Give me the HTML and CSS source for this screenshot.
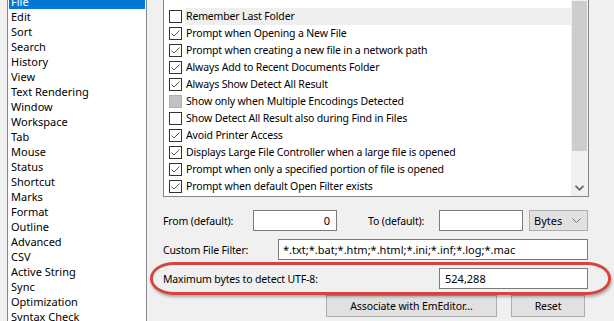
FILE: index.html
```html
<!DOCTYPE html>
<html lang="en">
<head>
    <meta charset="UTF-8">
    <title>Customize - File</title>
    <link rel="stylesheet" href="styles.css">
</head>
<body>
<div class="window">
    <ul class="nav">
        <li class="selected">File</li>
        <li>Edit</li>
        <li>Sort</li>
        <li>Search</li>
        <li>History</li>
        <li>View</li>
        <li>Text Rendering</li>
        <li>Window</li>
        <li>Workspace</li>
        <li>Tab</li>
        <li>Mouse</li>
        <li>Status</li>
        <li>Shortcut</li>
        <li>Marks</li>
        <li>Format</li>
        <li>Outline</li>
        <li>Advanced</li>
        <li>CSV</li>
        <li>Active String</li>
        <li>Sync</li>
        <li>Optimization</li>
        <li>Syntax Check</li>
    </ul>

    <div class="panel">
        <div class="checklist">
            <div class="rows">
                <div class="row hover"><span class="box"></span><span class="label">Remember Last Folder</span></div>
                <div class="row"><span class="box checked"></span><span class="label">Prompt when Opening a New File</span></div>
                <div class="row"><span class="box checked"></span><span class="label">Prompt when creating a new file in a network path</span></div>
                <div class="row"><span class="box checked"></span><span class="label">Always Add to Recent Documents Folder</span></div>
                <div class="row"><span class="box checked"></span><span class="label">Always Show Detect All Result</span></div>
                <div class="row"><span class="box grayed"></span><span class="label">Show only when Multiple Encodings Detected</span></div>
                <div class="row"><span class="box"></span><span class="label">Show Detect All Result also during Find in Files</span></div>
                <div class="row"><span class="box checked"></span><span class="label">Avoid Printer Access</span></div>
                <div class="row"><span class="box checked"></span><span class="label">Displays Large File Controller when a large file is opened</span></div>
                <div class="row"><span class="box checked"></span><span class="label">Prompt when only a specified portion of file is opened</span></div>
                <div class="row"><span class="box checked"></span><span class="label">Prompt when default Open Filter exists</span></div>
            </div>
            <div class="scrollbar">
                <div class="thumb"></div>
                <div class="track"></div>
                <div class="arrow">
                    <svg width="9" height="6" viewBox="0 0 9 6"><polyline points="0.5,0.8 4.5,4.8 8.5,0.8" fill="none" stroke="#606060" stroke-width="1.6"/></svg>
                </div>
            </div>
        </div>

        <div class="form">
            <div class="line">
                <label class="lbl-from">From (default):</label>
                <input class="field num" type="text" value="0">
                <label class="lbl-to">To (default):</label>
                <input class="field num-to" type="text" value="">
                <div class="combo">Bytes
                    <svg width="9" height="5" viewBox="0 0 9 5"><polyline points="0.5,0.5 4.5,4.5 8.5,0.5" fill="none" stroke="#707070" stroke-width="1"/></svg>
                </div>
            </div>
            <div class="line">
                <label class="lbl-filter">Custom File Filter:</label>
                <input class="field filter" type="text" value="*.txt;*.bat;*.htm;*.html;*.ini;*.inf;*.log;*.mac">
            </div>
            <div class="line marked">
                <label class="lbl-utf">Maximum bytes to detect UTF-8:</label>
                <input class="field utf" type="text" value="524,288">
                <div class="circle"></div>
            </div>
            <div class="buttons">
                <button class="btn assoc">Associate with EmEditor...</button>
                <button class="btn reset">Reset</button>
            </div>
        </div>
    </div>
</div>
</body>
</html>
```

FILE: styles.css
```css
*{
    margin: 0;
    padding: 0;
    box-sizing: border-box;
}
html, body{
    width: 614px;
    height: 321px;
    overflow: hidden;
    background: #f0f0f0;
    font-family: "Noto Sans", Arial, sans-serif;
    font-size: 11px;
    color: #000;
}
.window{
    display: flex;
    height: 321px;
}

/* left category list */
.nav{
    list-style: none;
    margin-left: 7px;
    margin-top: -7px;
    width: 140px;
    height: 340px;
    background: #fff;
    border: 1px solid #828790;
}
.nav li{
    height: 15px;
    line-height: 15px;
    margin: 0 1px;
    padding-left: 2px;
    white-space: nowrap;
}
.nav li.selected{
    background: #0078d7;
    color: #fff;
}

/* right side */
.panel{
    flex: 1;
    padding-left: 16px;
    font-size: 10.5px;
    letter-spacing: -0.15px;
}
.checklist{
    display: flex;
    width: 426px;
    margin-top: -1px;
    background: #fff;
    border: 1px solid #828790;
}
.rows{
    flex: 1;
    padding-top: 8px;
    padding-bottom: 1px;
}
.row{
    display: flex;
    align-items: center;
    height: 17px;
    padding-left: 5px;
}
.row .label{
    flex: 1;
    height: 17px;
    line-height: 17px;
    margin-left: 3px;
    padding-left: 1px;
    white-space: nowrap;
}
.row.hover .label{
    background: #efefef;
}
.box{
    width: 13px;
    height: 13px;
    border: 1px solid #333;
    background: #fff;
    flex: none;
}
.box.checked{
    background: #fff url("data:image/svg+xml;utf8,<svg xmlns='http://www.w3.org/2000/svg' width='11' height='11'><polyline points='1.5,5.5 4,8 9.5,2.5' fill='none' stroke='%23555' stroke-width='1'/></svg>") no-repeat center;
}
.box.grayed{
    background: #c2c2c2;
    border-color: #b0b0b0;
}

.scrollbar{
    width: 17px;
    display: flex;
    flex-direction: column;
    background: #f0f0f0;
}
.thumb{
    margin: 1px 1px 0 1px;
    height: 150px;
    background: #cdcdcd;
}
.track{
    flex: 1;
}
.arrow{
    height: 17px;
    display: flex;
    align-items: center;
    justify-content: center;
}

/* lower form */
.form{
    padding-top: 13px;
}
.line{
    display: flex;
    align-items: center;
    height: 21px;
    margin-bottom: 8px;
}
.line label{
    white-space: nowrap;
}
.lbl-from{ width: 90px; }
.lbl-to{ width: 71px; margin-left: 31px; }
.lbl-filter{ width: 115px; }
.lbl-utf{ width: 276px; }

.field{
    height: 21px;
    border: 1px solid #7a7a7a;
    background: #fff;
    font-family: "Noto Sans", Arial, sans-serif;
    font-size: 11px;
    letter-spacing: 0;
    padding: 0 4px;
    color: #000;
    outline: none;
}
.num{ width: 84px; text-align: right; padding-right: 6px; }
.num-to{ width: 84px; }
.filter{ width: 310px; }
.utf{ width: 149px; padding-left: 5px; }

.combo{
    display: flex;
    align-items: center;
    justify-content: space-between;
    margin-left: 6px;
    width: 59px;
    height: 21px;
    padding: 0 6px 0 4px;
    font-size: 11px;
    letter-spacing: 0;
    background: #e1e1e1;
    border: 1px solid #adadad;
}

.marked{
    position: relative;
}
.circle{
    position: absolute;
    left: -13px;
    top: -6px;
    width: 461px;
    height: 33px;
    border: 3px solid #d5453f;
    border-radius: 24px / 16px;
    box-shadow: 1px 2px 3px rgba(0, 0, 0, 0.3);
}

.buttons{
    display: flex;
    margin-top: -2px;
    padding-left: 163px;
}
.btn{
    height: 22px;
    background: #e1e1e1;
    border: 1px solid #adadad;
    font-family: "Noto Sans", Arial, sans-serif;
    font-size: 10.5px;
    letter-spacing: -0.1px;
    color: #000;
}
.assoc{ width: 171px; }
.reset{ width: 74px; margin-left: 14px; }
```
